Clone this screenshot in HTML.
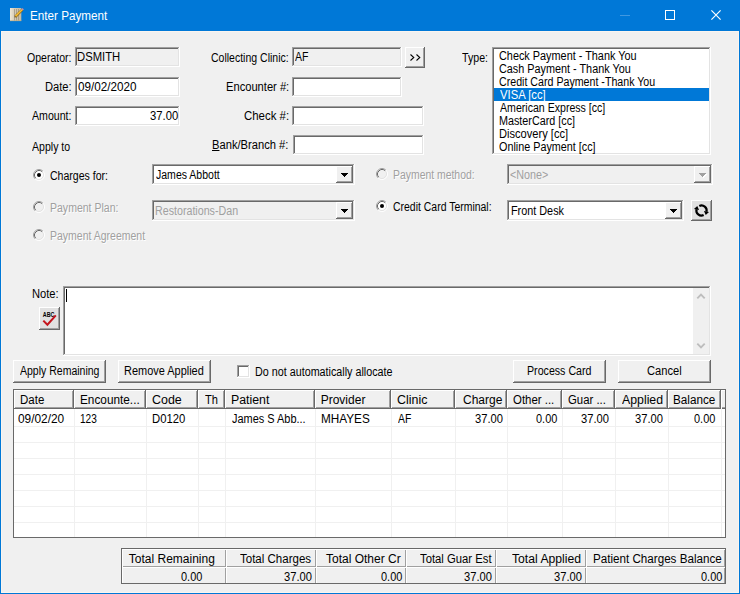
<!DOCTYPE html>
<html><head><meta charset="utf-8"><title>Enter Payment</title>
<style>
html,body{margin:0;padding:0;width:740px;height:594px;overflow:hidden;background:#F0F0F0;}
body{font-family:"Liberation Sans", sans-serif;position:relative;}
div,svg,.t{position:absolute;}
.t{white-space:nowrap;line-height:16px;height:16px;transform-origin:0 0;}
</style></head><body>
<div style="left:0px;top:0px;width:740px;height:594px;background:#0078D7;"></div>
<div style="left:1px;top:31px;width:738px;height:562px;background:#F0F0F0;box-shadow:inset 0 0 0 1px #FAF5F0;"></div>
<svg style="left:8px;top:6px" width="18" height="18" viewBox="0 0 18 18">
<defs><linearGradient id="pg" x1="0" x2="1" y1="0" y2="0"><stop offset="0" stop-color="#EFE8D8"/><stop offset=".4" stop-color="#D6CCB6"/><stop offset="1" stop-color="#C4B99F"/></linearGradient></defs>
<rect x="2" y="2" width="11.3" height="13" fill="url(#pg)"/>
<path d="M6.5 3v11.5M8.5 3v11.5M10.5 3v11.5" stroke="#8F8672" stroke-width=".8" opacity=".75"/>
<path d="M2 14.7h11.3" stroke="#B9A77F" stroke-width=".7"/>
<path d="M7.2 10.8L14.4 3.6" stroke="#7A5A14" stroke-width="2.6"/>
<path d="M7.4 10.4L14.3 3.5" stroke="#F4BC34" stroke-width="1.7"/>
<path d="M14 3.9l1.2-1.2" stroke="#C48CA4" stroke-width="2"/>
<path d="M6.5 11.5l1.3-.5-.8-.8z" fill="#4A3B1C"/>
</svg>
<div style="left:620px;top:15px;width:10px;height:1px;background:#4098E1;"></div>
<div style="left:665px;top:10px;width:10px;height:10px;border:1px solid #fff;box-sizing:border-box;"></div>
<svg style="left:711px;top:10px" width="10" height="10" viewBox="0 0 10 10"><path d="M.4 .4l9.2 9.2M9.6 .4l-9.2 9.2" stroke="#fff" stroke-width="1.15" fill="none"/></svg>
<div style="left:75px;top:47px;width:105px;height:20px;background:#F0F0F0;box-shadow:inset -1px -1px 0 #FFFFFF, inset 1px 1px 0 #A0A0A0, inset -2px -2px 0 #E3E3E3, inset 2px 2px 0 #696969;"></div>
<div style="left:75px;top:77px;width:105px;height:20px;background:#fff;box-shadow:inset -1px -1px 0 #FFFFFF, inset 1px 1px 0 #A0A0A0, inset -2px -2px 0 #E3E3E3, inset 2px 2px 0 #696969;"></div>
<div style="left:75px;top:106px;width:105px;height:20px;background:#fff;box-shadow:inset -1px -1px 0 #FFFFFF, inset 1px 1px 0 #A0A0A0, inset -2px -2px 0 #E3E3E3, inset 2px 2px 0 #696969;"></div>
<div style="left:292px;top:47px;width:110px;height:20px;background:#F0F0F0;box-shadow:inset -1px -1px 0 #FFFFFF, inset 1px 1px 0 #A0A0A0, inset -2px -2px 0 #E3E3E3, inset 2px 2px 0 #696969;"></div>
<div style="left:405px;top:47px;width:20px;height:21px;background:#F0F0F0;box-shadow:inset -1px -1px 0 #696969, inset 1px 1px 0 #FFFFFF, inset -2px -2px 0 #A0A0A0;"></div>
<svg style="left:410px;top:54px" width="11" height="7" viewBox="0 0 11 7"><path d="M.5 .5L3.8 3.5 .5 6.5M6.5 .5L9.8 3.5 6.5 6.5" stroke="#000" stroke-width="1.05" fill="none"/></svg>
<div style="left:292px;top:77px;width:110px;height:20px;background:#fff;box-shadow:inset -1px -1px 0 #FFFFFF, inset 1px 1px 0 #A0A0A0, inset -2px -2px 0 #E3E3E3, inset 2px 2px 0 #696969;"></div>
<div style="left:292px;top:106px;width:132px;height:20px;background:#fff;box-shadow:inset -1px -1px 0 #FFFFFF, inset 1px 1px 0 #A0A0A0, inset -2px -2px 0 #E3E3E3, inset 2px 2px 0 #696969;"></div>
<div style="left:293px;top:135px;width:131px;height:20px;background:#fff;box-shadow:inset -1px -1px 0 #FFFFFF, inset 1px 1px 0 #A0A0A0, inset -2px -2px 0 #E3E3E3, inset 2px 2px 0 #696969;"></div>
<div style="left:492px;top:47px;width:219px;height:108px;background:#fff;box-shadow:inset -1px -1px 0 #FFFFFF, inset 1px 1px 0 #A0A0A0, inset -2px -2px 0 #E3E3E3, inset 2px 2px 0 #696969;"></div>
<div style="left:494px;top:88px;width:215px;height:13px;background:#0078D7;"></div>
<svg style="left:33px;top:169px" width="12" height="12" viewBox="0 0 12 12">
<circle cx="6" cy="6" r="4.2" fill="#fff"/>
<path d="M2.11 9.89A5.5 5.5 0 0 1 9.89 2.11" fill="none" stroke="#A0A0A0" stroke-width="1"/>
<path d="M9.89 2.11A5.5 5.5 0 0 1 2.11 9.89" fill="none" stroke="#FFFFFF" stroke-width="1"/>
<path d="M2.82 9.18A4.5 4.5 0 0 1 9.18 2.82" fill="none" stroke="#696969" stroke-width="1"/>
<path d="M9.18 2.82A4.5 4.5 0 0 1 2.82 9.18" fill="none" stroke="#E3E3E3" stroke-width="1"/>
<circle cx="6" cy="6" r="2" fill="#000"/></svg>
<div style="left:152px;top:164px;width:203px;height:21px;background:#fff;box-shadow:inset -1px -1px 0 #FFFFFF, inset 1px 1px 0 #A0A0A0, inset -2px -2px 0 #E3E3E3, inset 2px 2px 0 #696969;"></div>
<div style="left:336px;top:166px;width:17px;height:17px;background:#F0F0F0;box-shadow:inset -1px -1px 0 #696969, inset 1px 1px 0 #FFFFFF, inset -2px -2px 0 #A0A0A0;"></div>
<svg style="left:341px;top:173px" width="8" height="5" shape-rendering="crispEdges"><path d="M0 0h7v1h-7zM1 1h5v1h-5zM2 2h3v1h-3zM3 3h1v1h-1z" fill="#000"/></svg>
<svg style="left:33px;top:201px" width="12" height="12" viewBox="0 0 12 12">
<circle cx="6" cy="6" r="4.2" fill="#F0F0F0"/>
<path d="M2.11 9.89A5.5 5.5 0 0 1 9.89 2.11" fill="none" stroke="#A0A0A0" stroke-width="1"/>
<path d="M9.89 2.11A5.5 5.5 0 0 1 2.11 9.89" fill="none" stroke="#FFFFFF" stroke-width="1"/>
<path d="M2.82 9.18A4.5 4.5 0 0 1 9.18 2.82" fill="none" stroke="#696969" stroke-width="1"/>
<path d="M9.18 2.82A4.5 4.5 0 0 1 2.82 9.18" fill="none" stroke="#E3E3E3" stroke-width="1"/>
</svg>
<div style="left:152px;top:200px;width:203px;height:21px;background:#F0F0F0;box-shadow:inset -1px -1px 0 #FFFFFF, inset 1px 1px 0 #A0A0A0, inset -2px -2px 0 #E3E3E3, inset 2px 2px 0 #696969;"></div>
<div style="left:336px;top:202px;width:17px;height:17px;background:#F0F0F0;box-shadow:inset -1px -1px 0 #696969, inset 1px 1px 0 #FFFFFF, inset -2px -2px 0 #A0A0A0;"></div>
<svg style="left:341px;top:209px" width="8" height="5" shape-rendering="crispEdges"><path d="M0 0h7v1h-7zM1 1h5v1h-5zM2 2h3v1h-3zM3 3h1v1h-1z" fill="#000"/></svg>
<svg style="left:33px;top:229px" width="12" height="12" viewBox="0 0 12 12">
<circle cx="6" cy="6" r="4.2" fill="#F0F0F0"/>
<path d="M2.11 9.89A5.5 5.5 0 0 1 9.89 2.11" fill="none" stroke="#A0A0A0" stroke-width="1"/>
<path d="M9.89 2.11A5.5 5.5 0 0 1 2.11 9.89" fill="none" stroke="#FFFFFF" stroke-width="1"/>
<path d="M2.82 9.18A4.5 4.5 0 0 1 9.18 2.82" fill="none" stroke="#696969" stroke-width="1"/>
<path d="M9.18 2.82A4.5 4.5 0 0 1 2.82 9.18" fill="none" stroke="#E3E3E3" stroke-width="1"/>
</svg>
<svg style="left:376px;top:168px" width="12" height="12" viewBox="0 0 12 12">
<circle cx="6" cy="6" r="4.2" fill="#F0F0F0"/>
<path d="M2.11 9.89A5.5 5.5 0 0 1 9.89 2.11" fill="none" stroke="#A0A0A0" stroke-width="1"/>
<path d="M9.89 2.11A5.5 5.5 0 0 1 2.11 9.89" fill="none" stroke="#FFFFFF" stroke-width="1"/>
<path d="M2.82 9.18A4.5 4.5 0 0 1 9.18 2.82" fill="none" stroke="#696969" stroke-width="1"/>
<path d="M9.18 2.82A4.5 4.5 0 0 1 2.82 9.18" fill="none" stroke="#E3E3E3" stroke-width="1"/>
</svg>
<div style="left:507px;top:164px;width:206px;height:21px;background:#F0F0F0;box-shadow:inset -1px -1px 0 #FFFFFF, inset 1px 1px 0 #A0A0A0, inset -2px -2px 0 #E3E3E3, inset 2px 2px 0 #696969;"></div>
<div style="left:694px;top:166px;width:17px;height:17px;background:#F0F0F0;box-shadow:inset -1px -1px 0 #696969, inset 1px 1px 0 #FFFFFF, inset -2px -2px 0 #A0A0A0;"></div>
<svg style="left:699px;top:173px" width="8" height="5" shape-rendering="crispEdges"><path transform="translate(1,1)" d="M0 0h7v1h-7zM1 1h5v1h-5zM2 2h3v1h-3zM3 3h1v1h-1z" fill="#fff"/><path d="M0 0h7v1h-7zM1 1h5v1h-5zM2 2h3v1h-3zM3 3h1v1h-1z" fill="#A0A0A0"/></svg>
<svg style="left:376px;top:200px" width="12" height="12" viewBox="0 0 12 12">
<circle cx="6" cy="6" r="4.2" fill="#fff"/>
<path d="M2.11 9.89A5.5 5.5 0 0 1 9.89 2.11" fill="none" stroke="#A0A0A0" stroke-width="1"/>
<path d="M9.89 2.11A5.5 5.5 0 0 1 2.11 9.89" fill="none" stroke="#FFFFFF" stroke-width="1"/>
<path d="M2.82 9.18A4.5 4.5 0 0 1 9.18 2.82" fill="none" stroke="#696969" stroke-width="1"/>
<path d="M9.18 2.82A4.5 4.5 0 0 1 2.82 9.18" fill="none" stroke="#E3E3E3" stroke-width="1"/>
<circle cx="6" cy="6" r="2" fill="#000"/></svg>
<div style="left:507px;top:200px;width:177px;height:21px;background:#fff;box-shadow:inset -1px -1px 0 #FFFFFF, inset 1px 1px 0 #A0A0A0, inset -2px -2px 0 #E3E3E3, inset 2px 2px 0 #696969;"></div>
<div style="left:665px;top:202px;width:17px;height:17px;background:#F0F0F0;box-shadow:inset -1px -1px 0 #696969, inset 1px 1px 0 #FFFFFF, inset -2px -2px 0 #A0A0A0;"></div>
<svg style="left:670px;top:209px" width="8" height="5" shape-rendering="crispEdges"><path d="M0 0h7v1h-7zM1 1h5v1h-5zM2 2h3v1h-3zM3 3h1v1h-1z" fill="#000"/></svg>
<div style="left:691px;top:200px;width:21px;height:21px;background:#E1E1E1;box-shadow:inset -1px -1px 0 #696969, inset 1px 1px 0 #FFFFFF, inset -2px -2px 0 #A0A0A0;"></div>
<svg style="left:691px;top:200px" width="21" height="21" viewBox="0 0 21 21">
<path d="M8.34 5.88A5.1 5.1 0 0 1 15.43 11.82" fill="none" stroke="#000" stroke-width="2.2"/>
<path d="M12.66 15.12A5.1 5.1 0 0 1 5.57 9.18" fill="none" stroke="#000" stroke-width="2.2"/>
<path d="M18.03 12.10L12.95 11.02L14.74 15.08zM2.97 8.90L8.05 9.98L6.26 5.92z" fill="#000"/>
</svg>
<div style="left:63px;top:286px;width:648px;height:70px;background:#fff;box-shadow:inset -1px -1px 0 #FFFFFF, inset 1px 1px 0 #A0A0A0, inset -2px -2px 0 #E3E3E3, inset 2px 2px 0 #696969;"></div>
<div style="left:693px;top:288px;width:16px;height:66px;background:#F0F0F0;"></div>
<svg style="left:696px;top:293px" width="10" height="7" viewBox="0 0 10 7"><path d="M1.3 5.4L5 1.7 8.7 5.4" stroke="#BDBDBD" stroke-width="1.9" fill="none"/></svg>
<svg style="left:696px;top:342px" width="10" height="7" viewBox="0 0 10 7"><path d="M1.3 1.6L5 5.3 8.7 1.6" stroke="#BDBDBD" stroke-width="1.9" fill="none"/></svg>
<div style="left:66px;top:289px;width:1px;height:13px;background:#000;"></div>
<div style="left:39px;top:307px;width:21px;height:23px;background:#E1E1E1;box-shadow:inset -1px -1px 0 #696969, inset 1px 1px 0 #FFFFFF, inset -2px -2px 0 #A0A0A0;"></div>
<svg style="left:39px;top:307px" width="21" height="23" viewBox="0 0 21 23">
<text x="3.8" y="9.8" font-family="Liberation Sans" font-size="6.6" font-weight="bold" fill="#000" textLength="11.6" lengthAdjust="spacingAndGlyphs">ABC</text>
<path d="M4.3 13.6L8.4 17.7 16.8 8.3" fill="none" stroke="#C4141C" stroke-width="2"/>
</svg>
<div style="left:13px;top:360px;width:93px;height:23px;background:#F0F0F0;box-shadow:inset -1px -1px 0 #696969, inset 1px 1px 0 #FFFFFF, inset -2px -2px 0 #A0A0A0;"></div>
<div style="left:118px;top:360px;width:93px;height:23px;background:#F0F0F0;box-shadow:inset -1px -1px 0 #696969, inset 1px 1px 0 #FFFFFF, inset -2px -2px 0 #A0A0A0;"></div>
<div style="left:237px;top:365px;width:13px;height:13px;background:#fff;box-shadow:inset -1px -1px 0 #FFFFFF, inset 1px 1px 0 #A0A0A0, inset -2px -2px 0 #E3E3E3, inset 2px 2px 0 #696969;"></div>
<div style="left:513px;top:360px;width:93px;height:23px;background:#F0F0F0;box-shadow:inset -1px -1px 0 #696969, inset 1px 1px 0 #FFFFFF, inset -2px -2px 0 #A0A0A0;"></div>
<div style="left:618px;top:360px;width:93px;height:23px;background:#F0F0F0;box-shadow:inset -1px -1px 0 #696969, inset 1px 1px 0 #FFFFFF, inset -2px -2px 0 #A0A0A0;"></div>
<div style="left:13px;top:389px;width:713px;height:149px;background:#fff;border:1px solid #696969;box-sizing:border-box;"></div>
<div style="left:14px;top:390px;width:60px;height:19px;background:#F0F0F0;box-shadow:inset -1px -1px 0 #696969, inset 1px 1px 0 #FFFFFF, inset -2px -2px 0 #A0A0A0;"></div>
<div style="left:74px;top:390px;width:72px;height:19px;background:#F0F0F0;box-shadow:inset -1px -1px 0 #696969, inset 1px 1px 0 #FFFFFF, inset -2px -2px 0 #A0A0A0;"></div>
<div style="left:146px;top:390px;width:52px;height:19px;background:#F0F0F0;box-shadow:inset -1px -1px 0 #696969, inset 1px 1px 0 #FFFFFF, inset -2px -2px 0 #A0A0A0;"></div>
<div style="left:198px;top:390px;width:27px;height:19px;background:#F0F0F0;box-shadow:inset -1px -1px 0 #696969, inset 1px 1px 0 #FFFFFF, inset -2px -2px 0 #A0A0A0;"></div>
<div style="left:225px;top:390px;width:90px;height:19px;background:#F0F0F0;box-shadow:inset -1px -1px 0 #696969, inset 1px 1px 0 #FFFFFF, inset -2px -2px 0 #A0A0A0;"></div>
<div style="left:315px;top:390px;width:76px;height:19px;background:#F0F0F0;box-shadow:inset -1px -1px 0 #696969, inset 1px 1px 0 #FFFFFF, inset -2px -2px 0 #A0A0A0;"></div>
<div style="left:391px;top:390px;width:64px;height:19px;background:#F0F0F0;box-shadow:inset -1px -1px 0 #696969, inset 1px 1px 0 #FFFFFF, inset -2px -2px 0 #A0A0A0;"></div>
<div style="left:455px;top:390px;width:52px;height:19px;background:#F0F0F0;box-shadow:inset -1px -1px 0 #696969, inset 1px 1px 0 #FFFFFF, inset -2px -2px 0 #A0A0A0;"></div>
<div style="left:507px;top:390px;width:55px;height:19px;background:#F0F0F0;box-shadow:inset -1px -1px 0 #696969, inset 1px 1px 0 #FFFFFF, inset -2px -2px 0 #A0A0A0;"></div>
<div style="left:562px;top:390px;width:53px;height:19px;background:#F0F0F0;box-shadow:inset -1px -1px 0 #696969, inset 1px 1px 0 #FFFFFF, inset -2px -2px 0 #A0A0A0;"></div>
<div style="left:615px;top:390px;width:53px;height:19px;background:#F0F0F0;box-shadow:inset -1px -1px 0 #696969, inset 1px 1px 0 #FFFFFF, inset -2px -2px 0 #A0A0A0;"></div>
<div style="left:668px;top:390px;width:53px;height:19px;background:#F0F0F0;box-shadow:inset -1px -1px 0 #696969, inset 1px 1px 0 #FFFFFF, inset -2px -2px 0 #A0A0A0;"></div>
<div style="left:721px;top:390px;width:4px;height:19px;background:#F0F0F0;box-shadow:inset 1px 1px 0 #FFFFFF, inset 0 -1px 0 #696969, inset 0 -2px 0 #A0A0A0;"></div>
<div style="left:14px;top:426px;width:711px;height:1px;background:#F0F0F0;"></div>
<div style="left:14px;top:442px;width:711px;height:1px;background:#F0F0F0;"></div>
<div style="left:14px;top:458px;width:711px;height:1px;background:#F0F0F0;"></div>
<div style="left:14px;top:474px;width:711px;height:1px;background:#F0F0F0;"></div>
<div style="left:14px;top:490px;width:711px;height:1px;background:#F0F0F0;"></div>
<div style="left:14px;top:506px;width:711px;height:1px;background:#F0F0F0;"></div>
<div style="left:14px;top:522px;width:711px;height:1px;background:#F0F0F0;"></div>
<div style="left:74px;top:409px;width:1px;height:128px;background:#F0F0F0;"></div>
<div style="left:146px;top:409px;width:1px;height:128px;background:#F0F0F0;"></div>
<div style="left:198px;top:409px;width:1px;height:128px;background:#F0F0F0;"></div>
<div style="left:225px;top:409px;width:1px;height:128px;background:#F0F0F0;"></div>
<div style="left:315px;top:409px;width:1px;height:128px;background:#F0F0F0;"></div>
<div style="left:391px;top:409px;width:1px;height:128px;background:#F0F0F0;"></div>
<div style="left:455px;top:409px;width:1px;height:128px;background:#F0F0F0;"></div>
<div style="left:507px;top:409px;width:1px;height:128px;background:#F0F0F0;"></div>
<div style="left:562px;top:409px;width:1px;height:128px;background:#F0F0F0;"></div>
<div style="left:615px;top:409px;width:1px;height:128px;background:#F0F0F0;"></div>
<div style="left:668px;top:409px;width:1px;height:128px;background:#F0F0F0;"></div>
<div style="left:721px;top:409px;width:1px;height:128px;background:#F0F0F0;"></div>
<div style="left:121px;top:548px;width:605px;height:36px;background:#F0F0F0;border:1px solid #696969;box-sizing:border-box;"></div>
<div style="left:122px;top:549px;width:104px;height:18px;box-shadow:inset 1px 1px 0 #FFFFFF, inset -1px -1px 0 #A0A0A0;"></div>
<div style="left:122px;top:567px;width:104px;height:16px;box-shadow:inset 1px 1px 0 #FFFFFF, inset -1px 0 0 #A0A0A0;"></div>
<div style="left:226px;top:549px;width:90px;height:18px;box-shadow:inset 1px 1px 0 #FFFFFF, inset -1px -1px 0 #A0A0A0;"></div>
<div style="left:226px;top:567px;width:90px;height:16px;box-shadow:inset 1px 1px 0 #FFFFFF, inset -1px 0 0 #A0A0A0;"></div>
<div style="left:316px;top:549px;width:90px;height:18px;box-shadow:inset 1px 1px 0 #FFFFFF, inset -1px -1px 0 #A0A0A0;"></div>
<div style="left:316px;top:567px;width:90px;height:16px;box-shadow:inset 1px 1px 0 #FFFFFF, inset -1px 0 0 #A0A0A0;"></div>
<div style="left:406px;top:549px;width:90px;height:18px;box-shadow:inset 1px 1px 0 #FFFFFF, inset -1px -1px 0 #A0A0A0;"></div>
<div style="left:406px;top:567px;width:90px;height:16px;box-shadow:inset 1px 1px 0 #FFFFFF, inset -1px 0 0 #A0A0A0;"></div>
<div style="left:496px;top:549px;width:90px;height:18px;box-shadow:inset 1px 1px 0 #FFFFFF, inset -1px -1px 0 #A0A0A0;"></div>
<div style="left:496px;top:567px;width:90px;height:16px;box-shadow:inset 1px 1px 0 #FFFFFF, inset -1px 0 0 #A0A0A0;"></div>
<div style="left:586px;top:549px;width:139px;height:18px;box-shadow:inset 1px 1px 0 #FFFFFF, inset -1px -1px 0 #A0A0A0;"></div>
<div style="left:586px;top:567px;width:139px;height:16px;box-shadow:inset 1px 1px 0 #FFFFFF, inset -1px 0 0 #A0A0A0;"></div>
<span class="t" style="left:30.03px;top:7.84px;font-size:12px;color:#fff;transform:scaleX(0.9744);">Enter Payment</span>
<span class="t" style="left:27.16px;top:49.67px;font-size:12.5px;color:#000;transform:scaleX(0.8431);">Operator:</span>
<span class="t" style="left:77.10px;top:48.67px;font-size:12.5px;color:#000;transform:scaleX(0.9022);">DSMITH</span>
<span class="t" style="left:45.11px;top:78.67px;font-size:12.5px;color:#000;transform:scaleX(0.8929);">Date:</span>
<span class="t" style="left:78.00px;top:78.67px;font-size:12.5px;color:#000;transform:scaleX(0.9355);">09/02/2020</span>
<span class="t" style="left:32.00px;top:107.67px;font-size:12.5px;color:#000;transform:scaleX(0.8478);">Amount:</span>
<span class="t" style="left:149.60px;top:107.67px;font-size:12.5px;color:#000;transform:scaleX(0.9000);">37.00</span>
<span class="t" style="left:32.00px;top:138.67px;font-size:12.5px;color:#000;transform:scaleX(0.8444);">Apply to</span>
<span class="t" style="left:210.66px;top:49.67px;font-size:12.5px;color:#000;transform:scaleX(0.8407);">Collecting Clinic:</span>
<span class="t" style="left:295.00px;top:48.67px;font-size:12.5px;color:#000;transform:scaleX(0.8438);">AF</span>
<span class="t" style="left:225.61px;top:78.67px;font-size:12.5px;color:#000;transform:scaleX(0.8913);">Encounter #:</span>
<span class="t" style="left:244.09px;top:107.67px;font-size:12.5px;color:#000;transform:scaleX(0.9149);">Check #:</span>
<span class="t" style="left:212.00px;top:136.67px;font-size:12.5px;color:#000;transform:scaleX(0.8941);"><u>B</u>ank/Branch #:</span>
<span class="t" style="left:462.00px;top:49.67px;font-size:12.5px;color:#000;transform:scaleX(0.8500);">Type:</span>
<span class="t" style="left:498.63px;top:47.67px;font-size:12.5px;color:#000;transform:scaleX(0.8694);">Check Payment - Thank You</span>
<span class="t" style="left:498.63px;top:60.67px;font-size:12.5px;color:#000;transform:scaleX(0.8667);">Cash Payment - Thank You</span>
<span class="t" style="left:498.65px;top:73.67px;font-size:12.5px;color:#000;transform:scaleX(0.8516);">Credit Card Payment -Thank You</span>
<span class="t" style="left:499.50px;top:86.67px;font-size:12.5px;color:#fff;transform:scaleX(0.9000);">VISA [cc]</span>
<span class="t" style="left:499.50px;top:99.67px;font-size:12.5px;color:#000;transform:scaleX(0.8468);">American Express [cc]</span>
<span class="t" style="left:498.64px;top:112.67px;font-size:12.5px;color:#000;transform:scaleX(0.8621);">MasterCard [cc]</span>
<span class="t" style="left:498.61px;top:125.67px;font-size:12.5px;color:#000;transform:scaleX(0.8882);">Discovery [cc]</span>
<span class="t" style="left:498.64px;top:138.67px;font-size:12.5px;color:#000;transform:scaleX(0.8636);">Online Payment [cc]</span>
<span class="t" style="left:49.66px;top:167.67px;font-size:12.5px;color:#000;transform:scaleX(0.8433);">Charges for:</span>
<span class="t" style="left:156.00px;top:166.67px;font-size:12.5px;color:#000;transform:scaleX(0.8421);">James Abbott</span>
<span class="t" style="left:50.16px;top:199.67px;font-size:12.5px;color:#A0A0A0;transform:scaleX(0.8418);text-shadow:1px 1px 0 #fff;">Payment Plan:</span>
<span class="t" style="left:155.40px;top:202.67px;font-size:12.5px;color:#A0A0A0;transform:scaleX(0.8542);">Restorations-Dan</span>
<span class="t" style="left:50.16px;top:227.67px;font-size:12.5px;color:#A0A0A0;transform:scaleX(0.8393);text-shadow:1px 1px 0 #fff;">Payment Agreement</span>
<span class="t" style="left:392.92px;top:166.67px;font-size:12.5px;color:#A0A0A0;transform:scaleX(0.8333);text-shadow:1px 1px 0 #fff;">Payment method:</span>
<span class="t" style="left:510.14px;top:166.67px;font-size:12.5px;color:#A0A0A0;transform:scaleX(0.8605);">&lt;None&gt;</span>
<span class="t" style="left:392.91px;top:198.67px;font-size:12.5px;color:#000;transform:scaleX(0.8362);">Credit Card Terminal:</span>
<span class="t" style="left:510.63px;top:202.67px;font-size:12.5px;color:#000;transform:scaleX(0.8667);">Front Desk</span>
<span class="t" style="left:31.61px;top:285.67px;font-size:12.5px;color:#000;transform:scaleX(0.8929);">Note:</span>
<span class="t" style="left:20.00px;top:362.67px;font-size:12.5px;color:#000;transform:scaleX(0.8404);">Apply Remaining</span>
<span class="t" style="left:124.12px;top:362.67px;font-size:12.5px;color:#000;transform:scaleX(0.8764);">Remove Applied</span>
<span class="t" style="left:254.64px;top:363.67px;font-size:12.5px;color:#000;transform:scaleX(0.8608);">Do not automatically allocate</span>
<span class="t" style="left:527.15px;top:362.67px;font-size:12.5px;color:#000;transform:scaleX(0.8514);">Process Card</span>
<span class="t" style="left:647.11px;top:362.67px;font-size:12.5px;color:#000;transform:scaleX(0.8919);">Cancel</span>
<span class="t" style="left:19.74px;top:391.84px;font-size:12px;color:#000;transform:scaleX(0.9583);">Date</span>
<span class="t" style="left:79.72px;top:391.84px;font-size:12px;color:#000;transform:scaleX(0.9831);">Encounte...</span>
<span class="t" style="left:151.66px;top:391.84px;font-size:12px;color:#000;transform:scaleX(1.0370);">Code</span>
<span class="t" style="left:204.70px;top:391.84px;font-size:12px;color:#000;transform:scaleX(0.9231);">Th</span>
<span class="t" style="left:230.67px;top:391.84px;font-size:12px;color:#000;transform:scaleX(1.0278);">Patient</span>
<span class="t" style="left:320.70px;top:391.84px;font-size:12px;color:#000;transform:scaleX(1.0000);">Provider</span>
<span class="t" style="left:396.66px;top:391.84px;font-size:12px;color:#000;transform:scaleX(1.0357);">Clinic</span>
<span class="t" style="left:463.00px;top:391.84px;font-size:12px;color:#000;transform:scaleX(1.0000);">Charge</span>
<span class="t" style="left:512.75px;top:391.84px;font-size:12px;color:#000;transform:scaleX(0.9512);">Other ...</span>
<span class="t" style="left:567.75px;top:391.84px;font-size:12px;color:#000;transform:scaleX(0.9474);">Guar ...</span>
<span class="t" style="left:621.50px;top:391.84px;font-size:12px;color:#000;transform:scaleX(1.0256);">Applied</span>
<span class="t" style="left:673.02px;top:391.84px;font-size:12px;color:#000;transform:scaleX(0.9762);">Balance</span>
<span class="t" style="left:18.00px;top:410.84px;font-size:12px;color:#000;transform:scaleX(0.9891);">09/02/20</span>
<span class="t" style="left:79.66px;top:410.84px;font-size:12px;color:#000;transform:scaleX(0.8421);">123</span>
<span class="t" style="left:151.56px;top:410.84px;font-size:12px;color:#000;transform:scaleX(0.9412);">D0120</span>
<span class="t" style="left:231.50px;top:410.84px;font-size:12px;color:#000;transform:scaleX(0.9125);">James S Abb...</span>
<span class="t" style="left:320.52px;top:410.84px;font-size:12px;color:#000;transform:scaleX(0.9792);">MHAYES</span>
<span class="t" style="left:397.50px;top:410.84px;font-size:12px;color:#000;transform:scaleX(0.8667);">AF</span>
<span class="t" style="left:474.57px;top:410.84px;font-size:12px;color:#000;transform:scaleX(0.9310);">37.00</span>
<span class="t" style="left:535.50px;top:410.84px;font-size:12px;color:#000;transform:scaleX(0.9130);">0.00</span>
<span class="t" style="left:581.07px;top:410.84px;font-size:12px;color:#000;transform:scaleX(0.9310);">37.00</span>
<span class="t" style="left:634.57px;top:410.84px;font-size:12px;color:#000;transform:scaleX(0.9310);">37.00</span>
<span class="t" style="left:694.00px;top:410.84px;font-size:12px;color:#000;transform:scaleX(0.9130);">0.00</span>
<span class="t" style="left:128.80px;top:550.84px;font-size:12px;color:#000;transform:scaleX(1.0000);">Total Remaining</span>
<span class="t" style="left:181.30px;top:568.84px;font-size:12px;color:#000;transform:scaleX(0.9130);">0.00</span>
<span class="t" style="left:240.00px;top:550.84px;font-size:12px;color:#000;transform:scaleX(0.9595);">Total Charges</span>
<span class="t" style="left:284.07px;top:568.84px;font-size:12px;color:#000;transform:scaleX(0.9310);">37.00</span>
<span class="t" style="left:326.00px;top:550.84px;font-size:12px;color:#000;transform:scaleX(1.0000);">Total Other Cr</span>
<span class="t" style="left:381.00px;top:568.84px;font-size:12px;color:#000;transform:scaleX(0.9130);">0.00</span>
<span class="t" style="left:419.50px;top:550.84px;font-size:12px;color:#000;transform:scaleX(0.9408);">Total Guar Est</span>
<span class="t" style="left:464.07px;top:568.84px;font-size:12px;color:#000;transform:scaleX(0.9310);">37.00</span>
<span class="t" style="left:512.00px;top:550.84px;font-size:12px;color:#000;transform:scaleX(1.0147);">Total Applied</span>
<span class="t" style="left:554.07px;top:568.84px;font-size:12px;color:#000;transform:scaleX(0.9310);">37.00</span>
<span class="t" style="left:593.33px;top:550.84px;font-size:12px;color:#000;transform:scaleX(0.9695);">Patient Charges Balance</span>
<span class="t" style="left:701.00px;top:568.84px;font-size:12px;color:#000;transform:scaleX(0.9130);">0.00</span>
</body></html>
